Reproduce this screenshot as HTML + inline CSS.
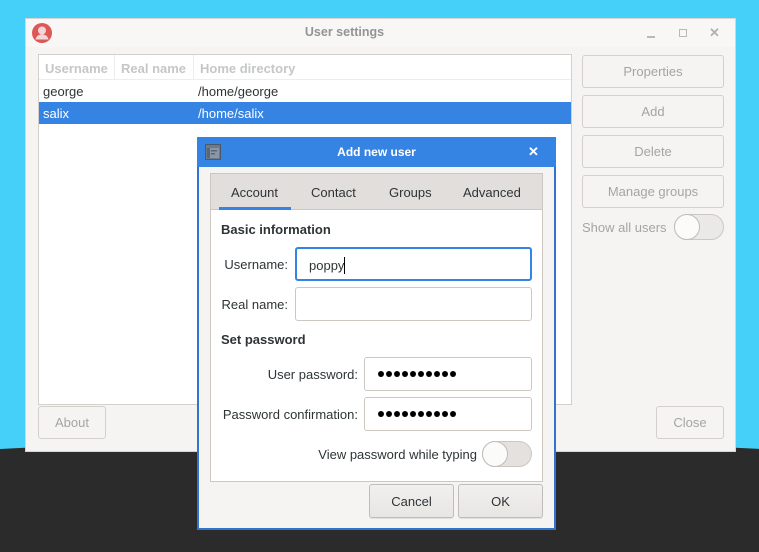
<!DOCTYPE html>
<html><head><style>
*{box-sizing:border-box;margin:0;padding:0}
html,body{width:759px;height:552px;overflow:hidden}
body{position:relative;background:#44d0f8;font-family:"Liberation Sans",sans-serif;font-size:13px;color:#2e3436}
.a{position:absolute}
.btn{position:absolute;border:1px solid #d3cfcb;border-radius:3px;background:#f5f4f2;color:#a3a5a5;display:flex;align-items:center;justify-content:center;font-size:13px}
.dbtn{position:absolute;border:1px solid #c0bdb9;border-radius:3px;background:linear-gradient(#f1f0ee,#e8e6e3);color:#2e3436;display:flex;align-items:center;justify-content:center;font-size:13px;box-shadow:0 1px 0 rgba(0,0,0,.08)}
.entry{position:absolute;background:#fff;border:1px solid #cdc7c2;border-radius:3px}
.sw{position:absolute;border:1px solid #cdc7c2;border-radius:14px;background:#e4e1de}
.sw i{position:absolute;left:-1px;top:-1px;border:1px solid #c0bdb9;border-radius:50%;background:#fbfbfa}
.lbl{position:absolute;font-size:13px;color:#2e3436;text-align:right}
</style></head><body>
<svg class="a" style="left:0;top:0" width="759" height="552"><ellipse cx="380" cy="1679" rx="3000" ry="1240" fill="#2b2b2b"/></svg>

<div class="a" style="left:25px;top:18px;width:711px;height:434px;background:#f5f4f2;border:1px solid #d8d4d0"></div>
<div class="a" style="left:26px;top:19px;width:709px;height:28px;background:#f8f7f6"></div>
<svg class="a" style="left:31px;top:22px" width="22" height="22"><circle cx="11" cy="11" r="10" fill="#e05555"/><circle cx="11" cy="8.5" r="4" fill="#f1d8d8"/><path d="M4.5 17.5c1-4 3.5-5 6.5-5s5.5 1 6.5 5z" fill="#f1d8d8"/></svg>
<div class="a" style="left:0;width:689px;top:25px;text-align:center;font-weight:bold;color:#929595;font-size:12.5px">User settings</div>
<div class="a" style="left:647px;top:36px;width:8px;height:2px;background:#b8b9b9"></div>
<div class="a" style="left:679px;top:29px;width:8px;height:8px;border:1px solid #b8b9b9"></div>
<div class="a" style="left:709px;top:25px;color:#b0b1b1;font-size:13px;font-weight:bold">✕</div>

<div class="a" style="left:38px;top:54px;width:534px;height:351px;background:#fff;border:1px solid #d3cfcb"></div>
<div class="a" style="left:39px;top:79px;width:532px;height:1px;background:#efedeb"></div>
<div class="a" style="left:114px;top:55px;width:1px;height:24px;background:#efedeb"></div>
<div class="a" style="left:193px;top:55px;width:1px;height:24px;background:#efedeb"></div>
<div class="a" style="left:45px;top:61px;font-weight:bold;color:#c5c7c7">Username</div>
<div class="a" style="left:121px;top:61px;font-weight:bold;color:#c5c7c7">Real name</div>
<div class="a" style="left:200px;top:61px;font-weight:bold;color:#c5c7c7">Home directory</div>
<div class="a" style="left:43px;top:84px">george</div>
<div class="a" style="left:198px;top:84px">/home/george</div>
<div class="a" style="left:39px;top:102px;width:532px;height:22px;background:#3584e4"></div>
<div class="a" style="left:43px;top:106px;color:#fff">salix</div>
<div class="a" style="left:198px;top:106px;color:#fff">/home/salix</div>

<div class="btn" style="left:582px;top:55px;width:142px;height:33px">Properties</div>
<div class="btn" style="left:582px;top:95px;width:142px;height:33px">Add</div>
<div class="btn" style="left:582px;top:135px;width:142px;height:33px">Delete</div>
<div class="btn" style="left:582px;top:175px;width:142px;height:33px">Manage groups</div>
<div class="a" style="left:582px;top:220px;color:#a3a5a5;font-size:13px">Show all users</div>
<div class="sw" style="left:674px;top:214px;width:50px;height:26px;background:#ebe9e7"><i style="width:26px;height:26px"></i></div>
<div class="btn" style="left:38px;top:406px;width:68px;height:33px">About</div>
<div class="btn" style="left:656px;top:406px;width:68px;height:33px">Close</div>

<div class="a" style="left:197px;top:137px;width:359px;height:393px;background:#f5f4f2;border:2px solid #2f74cf;border-top:none"></div>
<div class="a" style="left:197px;top:137px;width:359px;height:30px;background:#3584e4"></div>
<svg class="a" style="left:205px;top:144px" width="16" height="16"><rect x=".5" y=".5" width="15" height="15" fill="#6b7a8c" stroke="#4d5966"/><rect x="2" y="4" width="12" height="10" fill="#8a97a6"/><rect x="2" y="4" width="3" height="10" fill="#5b6573"/><rect x="6" y="6" width="6" height="1.5" fill="#5b6573"/><rect x="6" y="9" width="4" height="1.5" fill="#5b6573"/></svg>
<div class="a" style="left:197px;width:359px;top:145px;text-align:center;color:#fff;font-weight:bold;font-size:12px">Add new user</div>
<div class="a" style="left:528px;top:144px;color:#fff;font-size:13px;font-weight:bold">✕</div>

<div class="a" style="left:210px;top:173px;width:333px;height:309px;background:#fff;border:1px solid #cdc7c2"></div>
<div class="a" style="left:211px;top:174px;width:331px;height:36px;background:#e1dedb;border-bottom:1px solid #cdc7c2"></div>
<div class="a" style="left:219px;top:207px;width:72px;height:3px;background:#3584e4"></div>
<div class="a" style="left:231px;top:185px">Account</div>
<div class="a" style="left:311px;top:185px">Contact</div>
<div class="a" style="left:389px;top:185px">Groups</div>
<div class="a" style="left:463px;top:185px">Advanced</div>

<div class="a" style="left:221px;top:222px;font-weight:bold">Basic information</div>
<div class="lbl" style="left:215px;width:73px;top:257px">Username:</div>
<div class="entry" style="left:295px;top:247px;width:237px;height:34px;border:2px solid #3584e4"></div>
<div class="a" style="left:309px;top:257px">poppy<span style="display:inline-block;width:1px;height:17px;background:#000;vertical-align:-4px"></span></div>
<div class="lbl" style="left:215px;width:73px;top:297px">Real name:</div>
<div class="entry" style="left:295px;top:287px;width:237px;height:34px"></div>
<div class="a" style="left:221px;top:332px;font-weight:bold">Set password</div>
<div class="lbl" style="left:215px;width:143px;top:367px">User password:</div>
<div class="entry" style="left:364px;top:357px;width:168px;height:34px"></div>
<svg class="a" style="left:378px;top:369px" width="84" height="10" fill="#000"><g id="d"><circle cx="3" cy="5" r="3"/><circle cx="11" cy="5" r="3"/><circle cx="19" cy="5" r="3"/><circle cx="27" cy="5" r="3"/><circle cx="35" cy="5" r="3"/><circle cx="43" cy="5" r="3"/><circle cx="51" cy="5" r="3"/><circle cx="59" cy="5" r="3"/><circle cx="67" cy="5" r="3"/><circle cx="75" cy="5" r="3"/></g></svg>
<div class="lbl" style="left:215px;width:143px;top:407px">Password confirmation:</div>
<div class="entry" style="left:364px;top:397px;width:168px;height:34px"></div>
<svg class="a" style="left:378px;top:409px" width="84" height="10" fill="#000"><circle cx="3" cy="5" r="3"/><circle cx="11" cy="5" r="3"/><circle cx="19" cy="5" r="3"/><circle cx="27" cy="5" r="3"/><circle cx="35" cy="5" r="3"/><circle cx="43" cy="5" r="3"/><circle cx="51" cy="5" r="3"/><circle cx="59" cy="5" r="3"/><circle cx="67" cy="5" r="3"/><circle cx="75" cy="5" r="3"/></svg>
<div class="lbl" style="left:280px;width:197px;top:447px">View password while typing</div>
<div class="sw" style="left:482px;top:441px;width:50px;height:26px"><i style="width:26px;height:26px"></i></div>

<div class="dbtn" style="left:369px;top:484px;width:85px;height:34px">Cancel</div>
<div class="dbtn" style="left:458px;top:484px;width:85px;height:34px">OK</div>
</body></html>
